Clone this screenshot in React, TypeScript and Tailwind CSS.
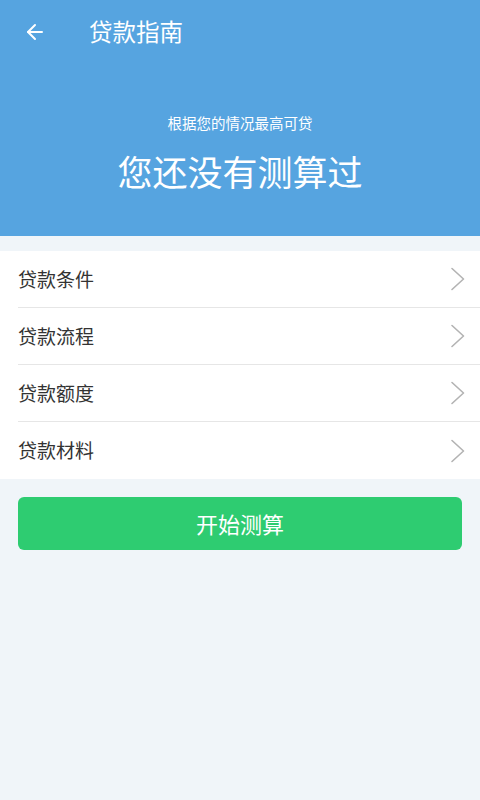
import { ArrowLeft } from "lucide-react";

const items = ["贷款条件", "贷款流程", "贷款额度", "贷款材料"];

const font = { fontFamily: '"Noto Sans CJK SC", "Noto Sans", sans-serif' };

function Chevron() {
  return (
    <svg width="16" height="26" viewBox="0 0 16 26" fill="none">
      <path d="M2 2.5 L13.5 13 L2 23.5" stroke="#b3b3b3" strokeWidth="1.6" strokeLinecap="round" strokeLinejoin="round" />
    </svg>
  );
}

export default function App() {
  return (
    <div className="w-[480px] h-[800px] bg-[#f0f5f9] flex flex-col" style={font}>
      {/* Header */}
      <div className="bg-[#56a4e0] h-[236px] flex flex-col text-white">
        <div className="h-[64px] flex items-center">
          <ArrowLeft className="ml-[23px] w-[24px] h-[24px]" strokeWidth={2} />
          <span className="ml-[42px] text-[23.5px] leading-none">贷款指南</span>
        </div>
        <div className="flex flex-col items-center">
          <span className="mt-[52px] text-[14.5px] leading-none">根据您的情况最高可贷</span>
          <span className="mt-[22px] text-[35px] leading-none">您还没有测算过</span>
        </div>
      </div>

      {/* List */}
      <div className="mt-[15px] bg-white">
        {items.map((item, i) => (
          <div key={item} className="pl-[18px]">
            <div
              className={
                "h-[57px] flex items-center justify-between pr-[14px] " +
                (i < items.length - 1 ? "border-b border-[#e6e6e6]" : "")
              }
            >
              <span className="text-[19px] text-[#333333]">{item}</span>
              <Chevron />
            </div>
          </div>
        ))}
      </div>

      {/* Button */}
      <div className="px-[18px] mt-[18px]">
        <button className="w-full h-[53px] rounded-[6px] bg-[#2ecc71] text-white text-[22px]">
          开始测算
        </button>
      </div>
    </div>
  );
}
